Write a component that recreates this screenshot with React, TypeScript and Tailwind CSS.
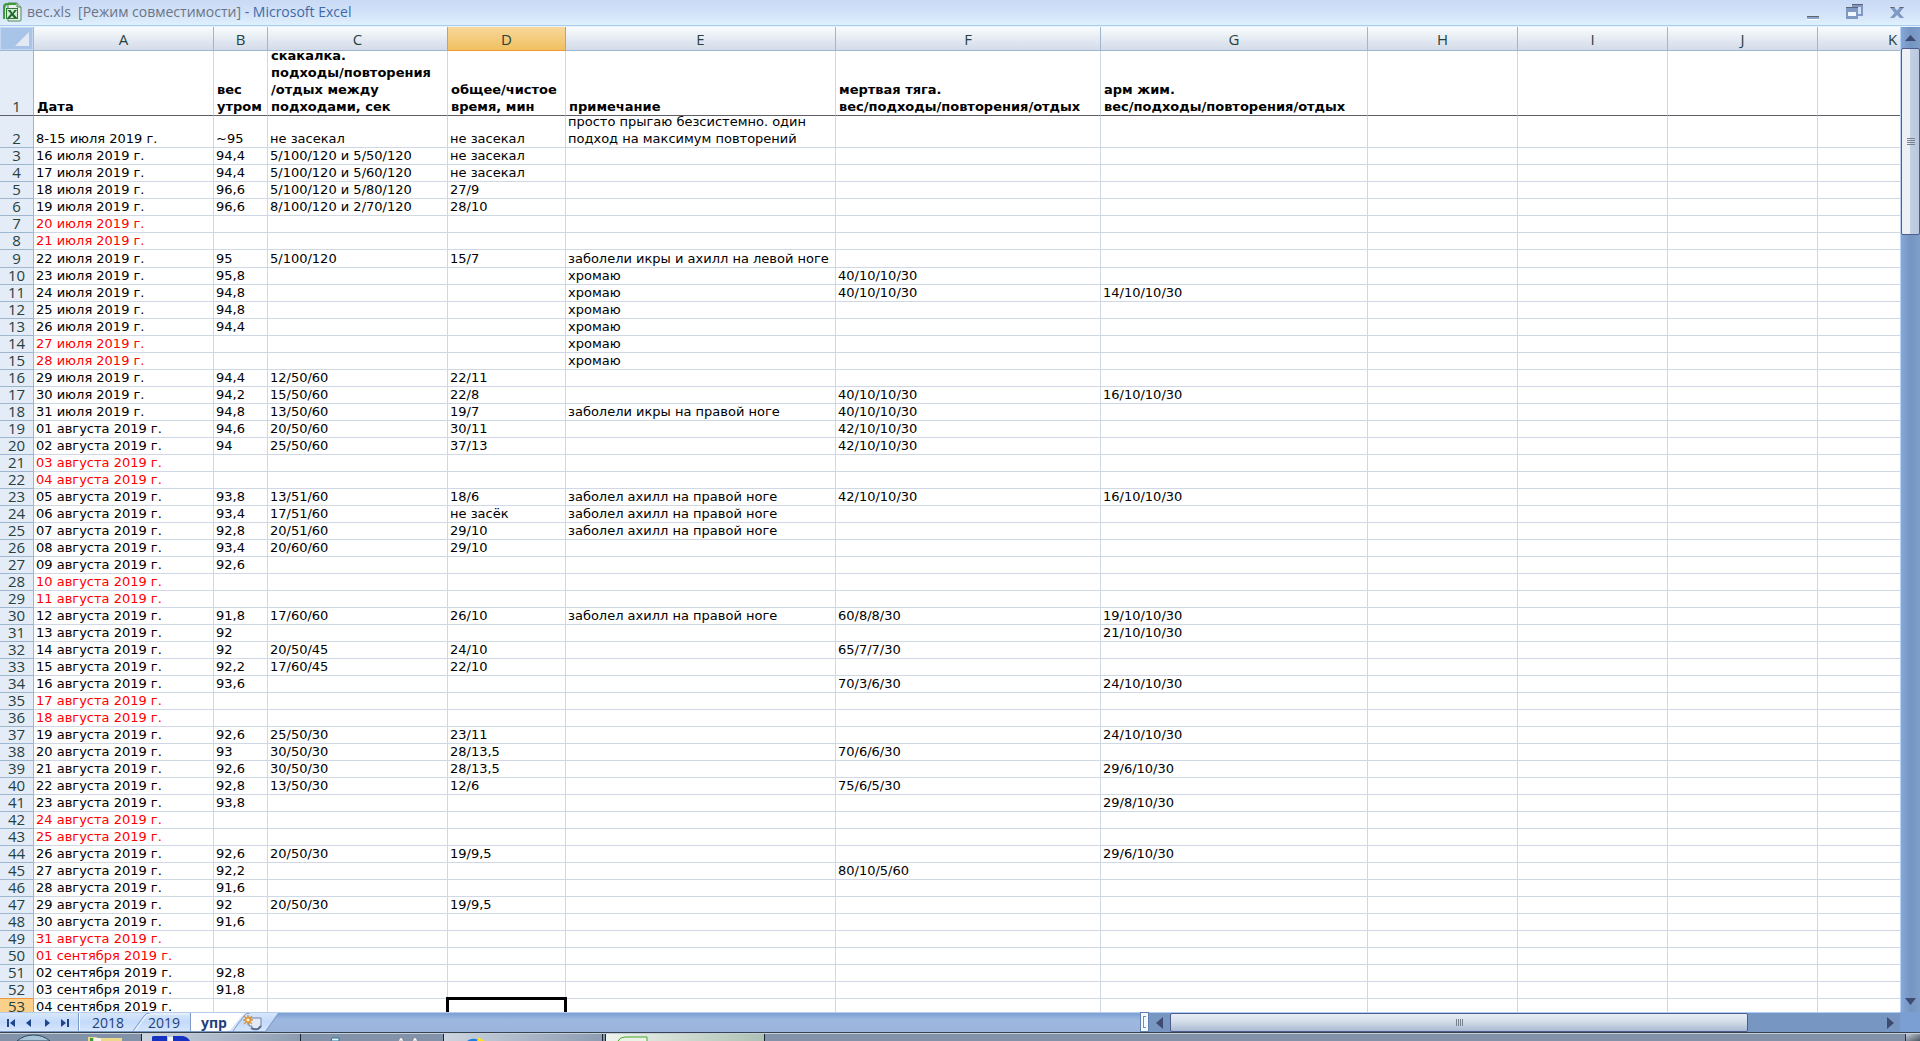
import React from "react";

type Row = { n: number; cells: Record<string, string>; off?: boolean };

const COLUMNS = [
  { id: "A", w: "w-[180px]" },
  { id: "B", w: "w-[54px]" },
  { id: "C", w: "w-[180px]" },
  { id: "D", w: "w-[118px]" },
  { id: "E", w: "w-[270px]" },
  { id: "F", w: "w-[265px]" },
  { id: "G", w: "w-[267px]" },
  { id: "H", w: "w-[150px]" },
  { id: "I", w: "w-[150px]" },
  { id: "J", w: "w-[150px]" },
  { id: "K", w: "w-[150px]" },
];

const TITLES: Record<string, string> = {
  A: "Дата",
  B: "вес\nутром",
  C: "скакалка.\nподходы/повторения\n/отдых между\nподходами, сек",
  D: "общее/чистое\nвремя, мин",
  E: "примечание",
  F: "мертвая тяга.\nвес/подходы/повторения/отдых",
  G: "арм жим.\nвес/подходы/повторения/отдых",
};

// Fields are A|B|C|D|E|F|G; a leading "!" marks a day off, drawn in red.
const SOURCE = `8-15 июля 2019 г.|~95|не засекал|не засекал|просто прыгаю безсистемно. один#подход на максимум повторений
16 июля 2019 г.|94,4|5/100/120 и 5/50/120|не засекал
17 июля 2019 г.|94,4|5/100/120 и 5/60/120|не засекал
18 июля 2019 г.|96,6|5/100/120 и 5/80/120|27/9
19 июля 2019 г.|96,6|8/100/120 и 2/70/120|28/10
!20 июля 2019 г.
!21 июля 2019 г.
22 июля 2019 г.|95|5/100/120|15/7|заболели икры и ахилл на левой ноге
23 июля 2019 г.|95,8|||хромаю|40/10/10/30
24 июля 2019 г.|94,8|||хромаю|40/10/10/30|14/10/10/30
25 июля 2019 г.|94,8|||хромаю
26 июля 2019 г.|94,4|||хромаю
!27 июля 2019 г.||||хромаю
!28 июля 2019 г.||||хромаю
29 июля 2019 г.|94,4|12/50/60|22/11
30 июля 2019 г.|94,2|15/50/60|22/8||40/10/10/30|16/10/10/30
31 июля 2019 г.|94,8|13/50/60|19/7|заболели икры на правой ноге|40/10/10/30
01 августа 2019 г.|94,6|20/50/60|30/11||42/10/10/30
02 августа 2019 г.|94|25/50/60|37/13||42/10/10/30
!03 августа 2019 г.
!04 августа 2019 г.
05 августа 2019 г.|93,8|13/51/60|18/6|заболел ахилл на правой ноге|42/10/10/30|16/10/10/30
06 августа 2019 г.|93,4|17/51/60|не засёк|заболел ахилл на правой ноге
07 августа 2019 г.|92,8|20/51/60|29/10|заболел ахилл на правой ноге
08 августа 2019 г.|93,4|20/60/60|29/10
09 августа 2019 г.|92,6
!10 августа 2019 г.
!11 августа 2019 г.
12 августа 2019 г.|91,8|17/60/60|26/10|заболел ахилл на правой ноге|60/8/8/30|19/10/10/30
13 августа 2019 г.|92|||||21/10/10/30
14 августа 2019 г.|92|20/50/45|24/10||65/7/7/30
15 августа 2019 г.|92,2|17/60/45|22/10
16 августа 2019 г.|93,6||||70/3/6/30|24/10/10/30
!17 августа 2019 г.
!18 августа 2019 г.
19 августа 2019 г.|92,6|25/50/30|23/11|||24/10/10/30
20 августа 2019 г.|93|30/50/30|28/13,5||70/6/6/30
21 августа 2019 г.|92,6|30/50/30|28/13,5|||29/6/10/30
22 августа 2019 г.|92,8|13/50/30|12/6||75/6/5/30
23 августа 2019 г.|93,8|||||29/8/10/30
!24 августа 2019 г.
!25 августа 2019 г.
26 августа 2019 г.|92,6|20/50/30|19/9,5|||29/6/10/30
27 августа 2019 г.|92,2||||80/10/5/60
28 августа 2019 г.|91,6
29 августа 2019 г.|92|20/50/30|19/9,5
30 августа 2019 г.|91,6
!31 августа 2019 г.
!01 сентября 2019 г.
02 сентября 2019 г.|92,8
03 сентября 2019 г.|91,8
04 сентября 2019 г.`;

const ROWS: Row[] = SOURCE.split("\n").map((line, i) => {
  const off = line.startsWith("!");
  const cells: Record<string, string> = {};
  line
    .replace("!", "")
    .split("|")
    .forEach((value, c) => {
      cells[COLUMNS[c].id] = value.replace("#", "\n");
    });
  return { n: i + 2, cells, off };
});

const rowHeight = (n: number) => (n === 2 ? "h-[31px]" : n === 9 ? "h-[17px]" : "h-4");

function ExcelIcon() {
  return (
    <svg viewBox="0 0 20 20" className="h-5 w-5" aria-hidden="true">
      <path d="M6 1h9l4 4v13q0 1-1 1H6z" fill="#e9f1ea" stroke="#4d8a58" />
      <path d="M15 1v4h4" fill="#b9d8bb" stroke="#4d8a58" />
      <path d="M1 5q0-4 4-4h9v2H6q-3 0-3 4v10H1z" fill="#3f9a3c" />
      <rect x="4" y="6" width="12" height="11" fill="#2f7a3b" />
      <rect x="5" y="7" width="10" height="9" fill="#d7ecd6" />
      <path d="M5.500 8h3l2 3 2-3h2.500l-3.400 4 3.600 4h-3.200l-2-2.600L8 16H5.300l3.600-4.200z" fill="#1c6a2b" />
    </svg>
  );
}

function TitleBar() {
  return (
    <header className="flex h-[27px] shrink-0 items-center border-b border-[#e8f4fd] bg-linear-to-b from-[#c9daf5] via-[#d3e2f8] to-[#e0f1fd]">
      <div className="flex h-full w-full items-center border-b border-[#a9cbee] pb-[2px] pl-[2px]">
        <ExcelIcon />
        <h1 className="ml-[5px] whitespace-pre text-[14px] leading-5 text-[#6a7585]">
          {"вес.xls  [Режим совместимости]"}
          <span className="text-[#3e6aaa]"> - Microsoft Excel</span>
        </h1>
        <div className="ml-auto flex items-center gap-6 pr-[14px]">
          <button aria-label="Свернуть" className="flex h-4 w-4 items-center">
            <svg viewBox="0 0 16 16" className="h-4 w-4">
              <path d="M1 12h12v3H1z" fill="#8ba5ca" />
              <path d="M1 12h12v1H1z" fill="#5f6672" />
              <path d="M1 15h12v1H1z" fill="#fff" />
            </svg>
          </button>
          <button aria-label="Восстановить" className="h-4 w-[18px]">
            <svg viewBox="0 0 18 16" className="h-4 w-[18px]">
              <path d="M6 0h11v12h-5v-2h3V3H8v1H6z" fill="#7e9ac4" />
              <path d="M6 0h11v1H6z" fill="#5f6672" />
              <path d="M0 3h12v12H0z" fill="#7e9ac4" />
              <path d="M0 3h12v1H0z" fill="#5f6672" />
              <path d="M2 8h8v4H2z" fill="#f2f7fe" />
            </svg>
          </button>
          <button aria-label="Закрыть" className="ml-[2px] h-4 w-4">
            <svg viewBox="0 0 16 16" className="h-4 w-4">
              <path d="M0 3h4l3 3.500L10 3h4L9.500 9l4.500 5h-4l-3-3-3 3H0l4.500-5z" fill="#7e9ac4" />
              <path d="M0 3h4l1 1H1zM10 3h4l-1 1H9z" fill="#5f6672" />
            </svg>
          </button>
        </div>
      </div>
    </header>
  );
}

function Sheet() {
  return (
    <main className="min-w-0 flex-1 overflow-hidden bg-white">
      <table className="w-[1968px] table-fixed border-separate border-spacing-0">
        <colgroup>
          <col className="w-[34px]" />
          {COLUMNS.map((c) => (
            <col key={c.id} className={c.w} />
          ))}
        </colgroup>
        <thead>
          <tr>
            <th className="border-r border-b border-[#9eb6ce] bg-[#a9c4e9] p-0" aria-label="Выделить все">
              <div className="flex h-[23px] items-end justify-end border border-[#c3d7f1] pr-[3px] pb-[3px]">
                <svg viewBox="0 0 14 14" className="h-[14px] w-[14px]" aria-hidden="true">
                  <path d="M14 0v14H0z" fill="#e3e9f2" />
                </svg>
              </div>
            </th>
            {COLUMNS.map(({ id }) => (
              <th
                key={id}
                scope="col"
                className={
                  id === "D"
                    ? "border-r border-b border-[#f29536] bg-linear-to-b from-[#f8d79b] to-[#f1c15f] p-0"
                    : id === "C"
                      ? "border-r border-b border-r-[#f29536] border-b-[#9eb6ce] bg-linear-to-b from-[#f9fcfd] to-[#d3dbe9] p-0"
                      : "border-r border-b border-[#9eb6ce] bg-linear-to-b from-[#f9fcfd] to-[#d3dbe9] p-0"
                }
              >
                <div className="h-[23px] text-center text-[15px] leading-[24px] font-normal text-[#27413e]">{id}</div>
              </th>
            ))}
          </tr>
        </thead>
        <tbody>
          <tr>
            <th scope="row" className="border-r border-b border-r-[#9eb6ce] border-b-[#5d5e66] bg-[#e4ecf7] p-0">
              <div className="flex h-16 items-end justify-center text-[15px] leading-[18px] font-normal text-[#27413e]">
                1
              </div>
            </th>
            {COLUMNS.map(({ id }) => (
              <td key={id} className="border-r border-b border-r-[#d0d7e5] border-b-[#5d5e66] p-0">
                <div
                  className={`flex h-16 items-end pl-[3px] font-['DejaVu_Sans',sans-serif] text-[13px] leading-[17px] font-bold whitespace-pre text-black ${
                    id === "C" ? "overflow-hidden" : ""
                  }`}
                >
                  {TITLES[id]}
                </div>
              </td>
            ))}
          </tr>
          {ROWS.map((row) => {
            const active = row.n === 53;
            const nextActive = row.n === 52;
            return (
              <tr key={row.n}>
                <th
                  scope="row"
                  className={
                    active
                      ? "border-r border-b border-[#f29536] bg-[#fbd08a] p-0"
                      : nextActive
                        ? "border-r border-b border-r-[#9eb6ce] border-b-[#f29536] bg-[#e4ecf7] p-0"
                        : "border-r border-b border-[#9eb6ce] bg-[#e4ecf7] p-0"
                  }
                >
                  <div
                    className={`flex items-end justify-center text-[15px] leading-[18px] font-normal text-[#27413e] ${rowHeight(row.n)}`}
                  >
                    {row.n}
                  </div>
                </th>
                {COLUMNS.map(({ id }) => (
                  <td key={id} className="relative border-r border-b border-[#d0d7e5] p-0">
                    <div
                      className={`flex items-end pl-[2px] font-['DejaVu_Sans',sans-serif] text-[13px] whitespace-pre ${
                        row.n === 2 ? "leading-[17px]" : "leading-4"
                      } ${row.off && id === "A" ? "text-[#ff0000]" : "text-black"} ${rowHeight(row.n)}`}
                    >
                      {row.cells[id]}
                    </div>
                    {active && id === "D" && (
                      <div className="absolute -top-[2px] -right-[2px] -bottom-[2px] -left-[2px] border-3 border-black" />
                    )}
                  </td>
                ))}
              </tr>
            );
          })}
        </tbody>
      </table>
    </main>
  );
}

function VerticalScroll() {
  return (
    <div className="flex w-5 shrink-0 flex-col border-l border-[#b8d3f3] bg-linear-to-r from-[#86a7d8] via-[#7595c2] to-[#7f9fca]">
      <button aria-label="Вверх" className="flex h-[21px] shrink-0 items-center justify-center">
        <svg viewBox="0 0 11 6" className="h-[6px] w-[11px]">
          <path d="M5.500 0 11 6H0z" fill="#3f4a72" />
        </svg>
      </button>
      <div className="flex h-[19%] flex-col items-center justify-center gap-px rounded-xs border border-[#4f5d8e] bg-linear-to-r from-[#eef0f5] from-45% via-[#c3d0e2] via-50% to-[#b9c8de]">
        <i className="h-px w-2 bg-[#7a8290]" />
        <i className="h-px w-2 bg-[#7a8290]" />
        <i className="h-px w-2 bg-[#7a8290]" />
        <i className="h-px w-2 bg-[#7a8290]" />
      </div>
      <button aria-label="Вниз" className="mt-auto flex h-[22px] shrink-0 items-center justify-center">
        <svg viewBox="0 0 11 7" className="h-[7px] w-[11px]">
          <path d="M5.500 7 11 0H0z" fill="#3f4a72" />
        </svg>
      </button>
    </div>
  );
}

const NAV = [
  { label: "Первый лист", d: "M1 1h2v8H1zM9 1v8L4 5z" },
  { label: "Предыдущий лист", d: "M7 1v8L2 5z" },
  { label: "Следующий лист", d: "M3 1v8l5-4z" },
  { label: "Последний лист", d: "M1 1v8l5-4zM7 1h2v8H7z" },
];

function SheetTabs() {
  return (
    <nav className="relative flex h-full items-center overflow-hidden border-t border-[#b5cdea] bg-linear-to-b from-[#7c9fd3] via-[#9db8df] via-35% to-[#9bb4da]">
      <svg viewBox="0 0 280 19" className="absolute top-0 left-0 h-[19px] w-[280px]" aria-hidden="true">
        <defs>
          <linearGradient id="tab" x1="0" y1="0" x2="0" y2="1">
            <stop offset="0" stopColor="#d8e7fb" />
            <stop offset="0.500" stopColor="#c3dafa" />
            <stop offset="1" stopColor="#d6e6fc" />
          </linearGradient>
        </defs>
        <path d="M0 0h278l-13 18H0z" fill="url(#tab)" />
        <path d="M191 -1h54l-13 16q-2 3-5 3h-36z" fill="#fff" />
        <path d="M0 18.500h266L278 1M78.500 0v18M133 18l11-15q2-3 6-3M190.500 0v18M233 18l11-15q2-3 6-3" fill="none" stroke="#7f9cc8" />
        <path d="M79.500 0v18M135 18l11-15q2-2 5-2h38" fill="none" stroke="#f4f9ff" />
      </svg>
      <div className="relative flex w-[79px] items-center gap-2 pl-[6px]">
        {NAV.map((n) => (
          <button key={n.label} aria-label={n.label} className="h-[10px] w-[10px]">
            <svg viewBox="0 0 10 10" className="h-[10px] w-[10px]">
              <path d={n.d} fill="#1e448c" />
            </svg>
          </button>
        ))}
      </div>
      <button className="relative w-[58px] text-center text-[14px] leading-[19px] text-[#1f3f7c]">2018</button>
      <button className="relative w-[54px] text-center text-[14px] leading-[19px] text-[#1f3f7c]">2019</button>
      <button className="relative w-[46px] text-center text-[14px] leading-[19px] font-bold text-[#1f3f7c]">упр</button>
      <button aria-label="Вставить лист" className="relative ml-[6px] h-[18px] w-5">
        <svg viewBox="0 0 20 18" className="h-[18px] w-5">
          <path d="M6 4h12v9l-2 2h-7V12H6z" fill="#e4ebf6" stroke="#6f83a8" />
          <path d="M8 14q3 2 7 1l3-3" fill="none" stroke="#5d6f94" strokeWidth="2" />
          <path d="M5 1l1 3 3-2-2 3 3 1-3 1 2 3-3-2-1 3-1-3-3 2 2-3-3-1 3-1-2-3 3 2z" fill="#f0a53a" stroke="#c57b1c" strokeWidth="0.500" />
          <circle cx="5" cy="6" r="1.300" fill="#fff6d8" />
        </svg>
      </button>
    </nav>
  );
}

function HorizontalScroll() {
  return (
    <div className="flex h-full min-w-0">
      <div className="flex w-[9px] shrink-0 items-center justify-center border border-[#5f7fae] bg-[#f5f9ff]">
        <i className="h-3 w-[3px] border border-r-0 border-[#6d8fc0]" />
      </div>
      <div className="flex min-w-0 flex-1 border-t border-[#a9cdf4] bg-[#7797c2]">
        <button aria-label="Влево" className="flex w-[21px] shrink-0 items-center justify-center">
          <svg viewBox="0 0 7 12" className="h-3 w-[7px]">
            <path d="M7 0v12L0 6z" fill="#3f4a72" />
          </svg>
        </button>
        <div className="flex w-[77%] items-center justify-center gap-px rounded-xs border border-[#4f5d8e] bg-linear-to-b from-[#e9eef5] via-[#d3dde9] via-45% to-[#a9bad2]">
          <i className="h-[7px] w-px bg-[#7a8290]" />
          <i className="h-[7px] w-px bg-[#7a8290]" />
          <i className="h-[7px] w-px bg-[#7a8290]" />
          <i className="h-[7px] w-px bg-[#7a8290]" />
        </div>
        <button aria-label="Вправо" className="mr-[6px] ml-auto flex shrink-0 items-center">
          <svg viewBox="0 0 7 12" className="h-3 w-[7px]">
            <path d="M0 0v12l7-6z" fill="#3f4a72" />
          </svg>
        </button>
      </div>
      <div className="w-5 shrink-0 bg-[#7b9fd3]" />
    </div>
  );
}

function Taskbar() {
  return (
    <footer className="flex h-[9px] shrink-0 overflow-hidden border-t border-[#36424f] bg-[#8292a9]">
      <div className="flex w-full border-t border-[#c3ced9]">
        <button aria-label="Пуск" className="ml-4 w-[35px] shrink-0">
          <svg viewBox="0 0 35 7" className="h-[7px] w-[35px]">
            <path d="M1 7Q8 1 17.500 1T34 7z" fill="#a9c4d6" stroke="#2c4a63" />
          </svg>
        </button>
        <button aria-label="Проводник" className="ml-9 w-9 shrink-0">
          <svg viewBox="0 0 36 7" className="h-[7px] w-9">
            <path d="M1 3h8l2 1h24v3H1z" fill="#ecd98b" />
            <path d="M3 4h3v3H3z" fill="#3f9a3c" />
            <path d="M7 4h7v3H7z" fill="#f8f6e8" />
          </svg>
        </button>
        <button aria-label="Окно 1" className="ml-[18px] w-[160px] shrink-0 border-x border-[#1d2530] bg-linear-to-r from-[#cdd5df] to-[#8d9cb2]">
          <svg viewBox="0 0 60 7" className="h-[7px] w-[60px]">
            <path d="M10 7V3q0-1 2-1h13v5z" fill="#1533c0" />
            <path d="M26 3h5v4h-5z" fill="#f2f5fb" />
            <path d="M31 2h10q5 1 7 5H31z" fill="#1533c0" />
          </svg>
        </button>
        <button aria-label="Планшет" className="ml-[29px] w-3 shrink-0">
          <svg viewBox="0 0 12 7" className="h-[7px] w-3">
            <path d="M1 7l1-3h7v3z" fill="#e5f6fc" stroke="#2c7599" />
          </svg>
        </button>
        <button aria-label="Кролик" className="ml-14 w-[22px] shrink-0">
          <svg viewBox="0 0 22 7" className="h-[7px] w-[22px]">
            <path d="M0 7l3-4 3 4zM14 7l3-4 3 4z" fill="#fff" stroke="#5a6472" strokeWidth="0.500" />
          </svg>
        </button>
        <button aria-label="Окно 2" className="ml-[23px] w-[160px] shrink-0 border-x border-[#1d2530] bg-linear-to-r from-[#cdd5df] to-[#8d9cb2]">
          <svg viewBox="0 0 60 7" className="h-[7px] w-[60px]">
            <path d="M23 7q4-3 9-2l5 2z" fill="#1d7fe6" />
            <path d="M35 3l2 2 4 2h-8z" fill="#ffe21a" />
          </svg>
        </button>
        <button aria-label="Excel" className="ml-[2px] w-[160px] shrink-0 border-x border-[#1d2530] bg-linear-to-r from-[#eef4ec] to-[#adc0b4]">
          <svg viewBox="0 0 60 7" className="h-[7px] w-[60px]">
            <path d="M12 7q2-4 7-4h22v4" fill="#e9f3e6" stroke="#4aa52e" />
          </svg>
        </button>
        <button aria-label="Показать рабочий стол" className="ml-auto w-[15px] shrink-0 border-l border-[#2b333d] bg-linear-to-br from-[#c3ccd6] to-[#4d5866]" />
      </div>
    </footer>
  );
}

export default function App() {
  return (
    <div className="flex h-screen flex-col overflow-hidden bg-white font-['Open_Sans','Noto_Sans',sans-serif]">
      <TitleBar />
      <div className="flex min-h-0 flex-1">
        <Sheet />
        <VerticalScroll />
      </div>
      <div className="grid h-5 shrink-0 grid-cols-[19fr_13fr]">
        <SheetTabs />
        <HorizontalScroll />
      </div>
      <Taskbar />
    </div>
  );
}
